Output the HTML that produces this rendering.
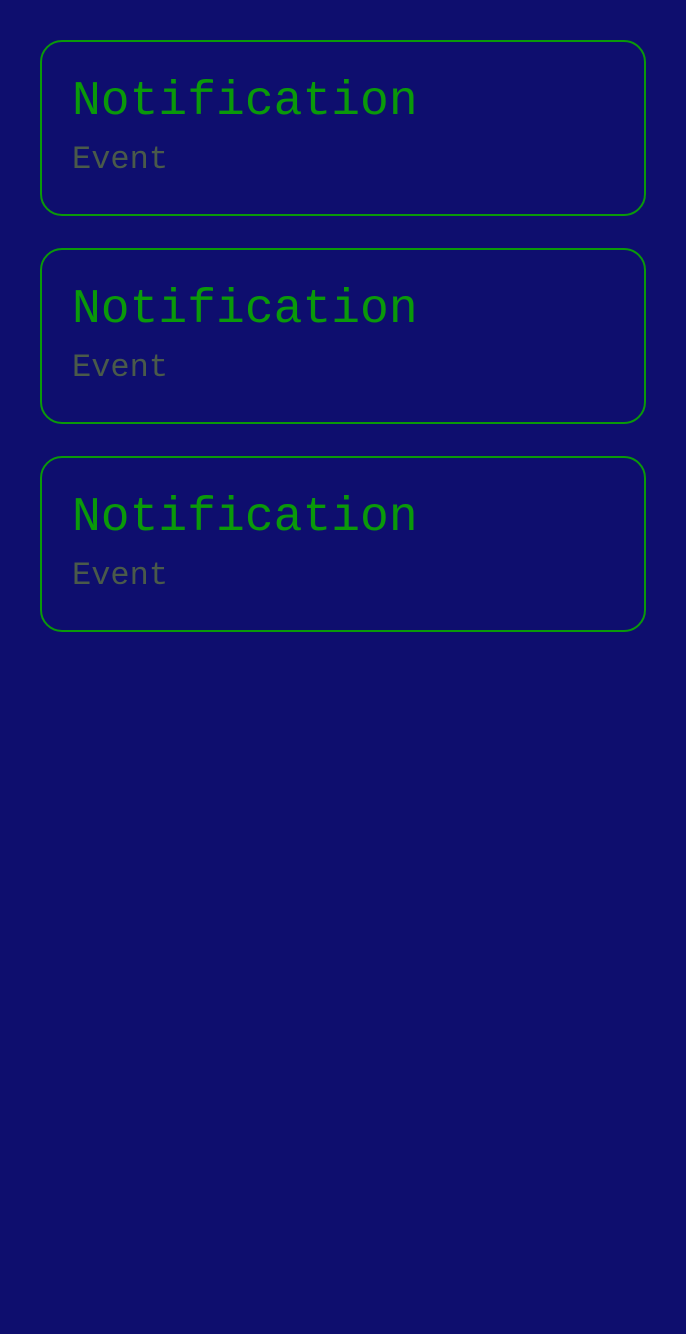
<!DOCTYPE html>
<html><head><style>
body{margin:0;width:686px;height:1334px;background:#0e0e6e;font-family:"Liberation Mono",monospace;position:relative;overflow:hidden}
.c{position:absolute;left:40px;width:602px;height:172px;border:2px solid #0a990a;border-radius:22px}
.t{position:absolute;left:30px;top:36px;font-size:48px;line-height:1;color:#0a990a;white-space:nowrap}
.e{position:absolute;left:30px;top:101.5px;font-size:32px;line-height:1;color:#4a5a4a}
</style></head><body>
<div class="c" style="top:40px"><div class="t">Notification</div><div class="e">Event</div></div>
<div class="c" style="top:248px"><div class="t">Notification</div><div class="e">Event</div></div>
<div class="c" style="top:456px"><div class="t">Notification</div><div class="e">Event</div></div>
</body></html>
